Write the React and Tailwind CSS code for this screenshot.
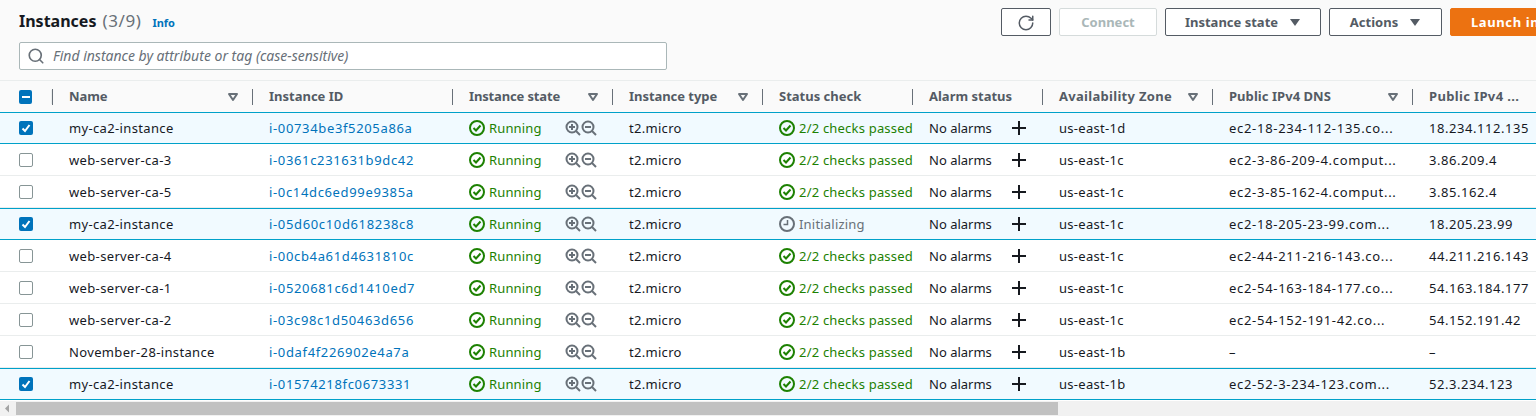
import { RotateCw, Search } from "lucide-react";

const gridCols =
  "grid grid-cols-[52px_200px_200px_160px_150px_150px_130px_170px_200px_200px] w-[1612px]";

const columns = [
  { label: "Name", sort: true, track: "tracking-[-0.1px]" },
  { label: "Instance ID", track: "tracking-normal" },
  { label: "Instance state", sort: true, track: "tracking-[-0.15px]" },
  { label: "Instance type", sort: true, track: "tracking-[-0.05px]" },
  { label: "Status check", track: "tracking-normal" },
  { label: "Alarm status", track: "tracking-normal" },
  { label: "Availability Zone", sort: true, track: "tracking-[0.3px]" },
  { label: "Public IPv4 DNS", sort: true, track: "tracking-[0.05px]" },
  { label: "Public IPv4 ...", track: "tracking-[0.35px]" },
];

const instances = [
  { name: "my-ca2-instance", id: "i-00734be3f5205a86a", zone: "us-east-1d", dns: "ec2-18-234-112-135.co...", ip: "18.234.112.135", selected: true },
  { name: "web-server-ca-3", id: "i-0361c231631b9dc42", zone: "us-east-1c", dns: "ec2-3-86-209-4.comput...", ip: "3.86.209.4" },
  { name: "web-server-ca-5", id: "i-0c14dc6ed99e9385a", zone: "us-east-1c", dns: "ec2-3-85-162-4.comput...", ip: "3.85.162.4" },
  { name: "my-ca2-instance", id: "i-05d60c10d618238c8", zone: "us-east-1c", dns: "ec2-18-205-23-99.com...", ip: "18.205.23.99", selected: true, initializing: true },
  { name: "web-server-ca-4", id: "i-00cb4a61d4631810c", zone: "us-east-1c", dns: "ec2-44-211-216-143.co...", ip: "44.211.216.143" },
  { name: "web-server-ca-1", id: "i-0520681c6d1410ed7", zone: "us-east-1c", dns: "ec2-54-163-184-177.co...", ip: "54.163.184.177" },
  { name: "web-server-ca-2", id: "i-03c98c1d50463d656", zone: "us-east-1c", dns: "ec2-54-152-191-42.co...", ip: "54.152.191.42" },
  { name: "November-28-instance", id: "i-0daf4f226902e4a7a", zone: "us-east-1b", dns: "–", ip: "–" },
  { name: "my-ca2-instance", id: "i-01574218fc0673331", zone: "us-east-1b", dns: "ec2-52-3-234-123.com...", ip: "52.3.234.123", selected: true },
];

function CheckCircle() {
  return (
    <svg width="16" height="16" viewBox="0 0 16 16" fill="none" stroke="#1d8102" strokeWidth="2" className="mb-[2px] shrink-0">
      <circle cx="8" cy="8" r="7" />
      <path d="M4.5 8l2.5 2.5 4.5-5" />
    </svg>
  );
}

function ClockIcon() {
  return (
    <svg width="16" height="16" viewBox="0 0 16 16" fill="none" stroke="#687078" strokeWidth="2" className="mb-[2px] shrink-0">
      <circle cx="8" cy="8" r="7" />
      <path d="M8.5 4v4.5H4.5" strokeWidth="1.5" />
    </svg>
  );
}

function PlusIcon() {
  return (
    <svg width="16" height="16" viewBox="0 0 16 16" fill="none" stroke="#16191f" strokeWidth="2" className="mb-[2px]">
      <path d="M8 1v14M1 8h14" />
    </svg>
  );
}

function ZoomGlass({ plus }) {
  return (
    <svg width="16" height="16" viewBox="0 0 16 16" fill="none" stroke="#687078" strokeWidth="2" className="mb-[2px] shrink-0">
      <circle cx="7" cy="7" r="5.5" />
      <path d="M11 11l4 4" />
      <path d={plus ? "M4 7h6M7 4v6" : "M4 7h6"} />
    </svg>
  );
}

function SortCaret() {
  return (
    <svg width="12" height="10" viewBox="0 0 12 10" fill="none" stroke="#687078" strokeWidth="2" className="shrink-0">
      <path d="M2 2h8L6 8z" strokeLinejoin="round" />
    </svg>
  );
}

function SolidCaret() {
  return (
    <svg width="12" height="9" viewBox="0 0 12 9" fill="#545b64" className="shrink-0">
      <path d="M1 1h10L6 8z" />
    </svg>
  );
}

function Checkbox({ checked, mixed }) {
  if (mixed) {
    return (
      <span className="flex h-[14px] w-[14px] items-center justify-center rounded-[2px] bg-[#0073bb]">
        <span className="h-[2px] w-2 bg-white" />
      </span>
    );
  }
  if (checked) {
    return (
      <span className="flex h-[14px] w-[14px] items-center justify-center rounded-[2px] bg-[#0073bb]">
        <svg width="10" height="10" viewBox="0 0 10 10" fill="none" stroke="white" strokeWidth="2">
          <path d="M1.5 5.5l2.5 2.5 4.5-6" />
        </svg>
      </span>
    );
  }
  return <span className="h-[14px] w-[14px] rounded-[2px] border border-[#879596] bg-white" />;
}

function Button({ children, className }) {
  return (
    <button className={"flex h-7 items-center justify-center gap-[11px] rounded-[2px] border pt-px text-[13px] font-bold " + className}>
      {children}
    </button>
  );
}

function HeaderRow() {
  return (
    <div className={gridCols + " h-[31px] items-center bg-[#fafafa] font-bold text-[#545b64]"}>
      <div className="flex items-center pl-[19px]">
        <Checkbox mixed />
        <span className="ml-[19px] h-[14px] w-px bg-[#eaeded]" />
      </div>
      {columns.map((col) => (
        <div key={col.label} className="flex h-[16px] items-center justify-between border-l border-[#687078] pl-4 pr-[13px]">
          <span className={col.track}>{col.label}</span>
          {col.sort && <SortCaret />}
        </div>
      ))}
    </div>
  );
}

function InstanceRow({ row }) {
  const rowStyle = row.selected
    ? "bg-[#f1faff] border-y border-[#00a1c9] pt-px"
    : "bg-white border-b border-[#eaeded] pt-[2px]";
  return (
    <div className={gridCols + " h-8 items-center text-[#16191f] " + rowStyle}>
      <div className="flex pb-[2px] pl-[19px]">
        <Checkbox checked={row.selected} />
      </div>
      <div className="pl-[17px] tracking-[0.35px]">{row.name}</div>
      <div className="pl-[17px] tracking-[0.65px] text-[#0073bb]">{row.id}</div>
      <div className="flex items-center pl-[17px]">
        <CheckCircle />
        <span className="ml-1 w-[76px] tracking-[0.15px] text-[#1d8102]">Running</span>
        <ZoomGlass plus />
        <ZoomGlass />
      </div>
      <div className="pl-[17px] tracking-[0.3px]">t2.micro</div>
      <div className="flex items-center pl-[17px]">
        {row.initializing ? <ClockIcon /> : <CheckCircle />}
        {row.initializing ? (
          <span className="ml-1 tracking-[0.2px] text-[#687078]">Initializing</span>
        ) : (
          <span className="ml-1 whitespace-nowrap tracking-[0.2px] text-[#1d8102]">2/2 checks passed</span>
        )}
      </div>
      <div className="flex items-center pl-[17px]">
        <span className="w-[82px]">No alarms</span>
        <PlusIcon />
      </div>
      <div className="pl-[17px] tracking-[0.3px]">{row.zone}</div>
      <div className="pl-[17px] whitespace-nowrap tracking-[0.7px]">{row.dns}</div>
      <div className="pl-[17px] tracking-[0.55px]">{row.ip}</div>
    </div>
  );
}

export default function App() {
  return (
    <div className="h-[416px] w-[1536px] overflow-hidden bg-white text-[13px] font-['Noto_Sans',sans-serif]">
      <div className="h-[81px] border-b border-[#eaeded] bg-[#fafafa] pl-[19px] pt-2">
        <div className="flex h-7 items-center justify-between">
          <div className="flex items-baseline pb-[2px]">
            <h1 className="text-[16px] font-bold text-[#16191f]">Instances</h1>
            <span className="ml-[6px] text-[17px] tracking-[0.6px] text-[#687078]">(3/9)</span>
            <span className="ml-[11px] text-[11px] font-bold text-[#0073bb]">Info</span>
          </div>
          <div className="flex w-[535px] shrink-0 gap-2 overflow-hidden">
            <Button className="w-[50px] shrink-0 border-[#545b64] bg-white text-[#545b64]">
              <RotateCw size={18} strokeWidth={2} />
            </Button>
            <Button className="w-[98px] shrink-0 border-[#d5dbdb] bg-white text-[#aab7b8]">Connect</Button>
            <Button className="w-[156px] shrink-0 border-[#545b64] bg-white text-[#545b64]">
              Instance state <SolidCaret />
            </Button>
            <Button className="w-[113px] shrink-0 border-[#545b64] bg-white text-[#545b64]">
              Actions <SolidCaret />
            </Button>
            <Button className="shrink-0 whitespace-nowrap border-[#ec7211] bg-[#ec7211] px-5 tracking-[0.6px] text-white">Launch instances</Button>
          </div>
        </div>
        <div className="mt-[6px] flex h-7 w-[648px] items-center rounded-[2px] border border-[#aab7b8] bg-white pl-[7px]">
          <Search size={18} strokeWidth={2.2} className="text-[#687078]" />
          <span className="ml-2 pb-[2px] text-[14px] italic text-[#687078]">Find instance by attribute or tag (case-sensitive)</span>
        </div>
      </div>
      <HeaderRow />
      {instances.map((row) => (
        <InstanceRow key={row.id} row={row} />
      ))}
      <div className="mt-px flex h-[15px] items-center bg-[#f1f1f1]">
        <svg width="16" height="15" viewBox="0 0 16 15" fill="#a3a3a3" className="shrink-0">
          <path d="M5 7.5l4-4v8z" />
        </svg>
        <div className="h-[13px] w-[1042px] bg-[#c1c1c1]" />
      </div>
    </div>
  );
}
